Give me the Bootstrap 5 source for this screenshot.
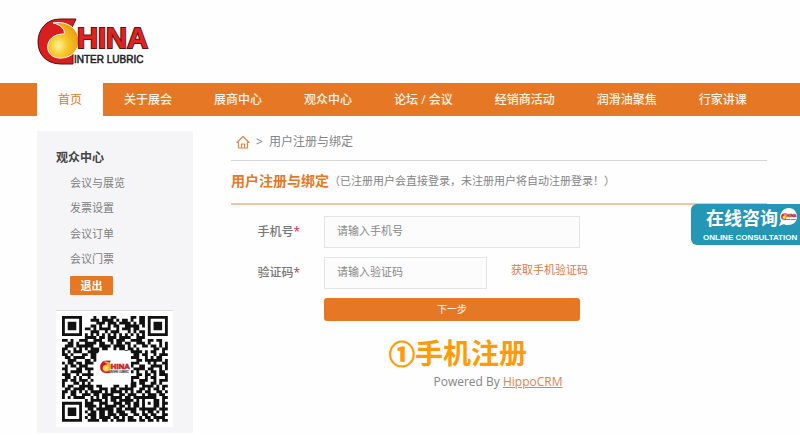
<!DOCTYPE html>
<html lang="zh-CN">
<head>
<meta charset="utf-8">
<meta name="viewport" content="width=device-width, initial-scale=1">
<title>用户注册与绑定</title>
<link href="https://cdn.jsdelivr.net/npm/bootstrap@5.3.0/dist/css/bootstrap.min.css" rel="stylesheet">
<style>
:root{--brand:#e67825}
body{font-family:"Open Sans","Noto Sans CJK SC",sans-serif;font-size:12px;line-height:20px;color:#858585;background:#fefefe}
.wrap{padding-left:37px;padding-right:33px}
.site-head{padding-top:16px;height:83px}
.site-nav{background:var(--brand)}
.site-nav .nav-link{padding:7px 21px 6px;color:#fff3e4;font-size:12px;line-height:20px;font-weight:500}
.site-nav .nav-link.active{background:#fefefe;color:var(--brand);font-weight:400}
.side{width:156px;background:#f5f5f7;padding:17px 19px 6px;margin-top:15px}
.side h2{font-size:12px;line-height:20px;color:#444;font-weight:700;margin-bottom:4px}
.side li{font-size:11px;line-height:20px;margin-bottom:5px;padding:1px 0 0 14px}
.side li:nth-child(even){padding-top:0}
.side a.item{color:#808080;text-decoration:none}
.btn-brand{background:var(--brand);color:#fff;border:0;border-radius:3px;font-size:10px;line-height:15px;padding:4px}
.btn-brand:hover{background:#d2691a;color:#fff}
.btn-exit{width:43px;font-size:11px;font-weight:700;border-radius:1px;padding:2px 0;margin:7px 0 0 14px}
.qr{display:block;width:117px;background:#fff;margin-top:15px}
.main-col{margin:15px 0 0 38px}
.crumb{border-bottom:1px solid #d6d6d6;padding:1px 0 8px 5px;gap:6px}
.title-row{border-bottom:2px solid #ecc6a5;padding:10px 0 12px}
.title-row h1{font-size:14px;line-height:20px;font-weight:700;color:var(--brand)}
.title-row span{font-size:11px}
.reg-form{padding-top:11px}
.reg-form .lab{width:69px;margin-right:24px;text-align:right;font-weight:500;color:#777}
.reg-form .lab b{color:#e0264a;font-weight:500}
.reg-form .form-control{border:1px solid #e4e4e6;border-radius:0;background:#fcfcfc;font-size:11px;line-height:20px;padding:4px 12px 6px;min-height:0}
.reg-form .form-control::placeholder{color:#888;opacity:1}
.form-line{margin-bottom:9px}
.field{width:256px}
.field-short{width:163px}
.code-link{font-size:11px;color:#dd7945;text-decoration:none;margin:0 0 6px 24px}
.foot{margin-right:82px}
.step{font-size:28px;line-height:32px;font-weight:700;color:#ff9c05}
.step span{-webkit-text-stroke:1px #ff9c05;font-size:26px}
.powered{padding-left:80px;padding-top:2px}
.foot a{color:#dc8450}
.consult{position:absolute;right:0;top:204px;width:109px;height:41px;background:#2596b4;border-radius:6px 0 0 6px;color:#fff;text-decoration:none}
.consult svg{display:block}
</style>
<script src="https://cdn.jsdelivr.net/npm/bootstrap@5.3.0/dist/js/bootstrap.bundle.min.js"></script>
</head>
<body>
<header class="site-head wrap">
<a href="#" aria-label="China Inter Lubric">
<svg width="112" height="52" viewBox="0 0 112 52">
<defs>
<radialGradient id="drop" cx=".35" cy=".65" r=".7"><stop offset="0" stop-color="#fff39a"/><stop offset=".4" stop-color="#f8c72a"/><stop offset="1" stop-color="#e99a0c"/></radialGradient>
<g id="mark-shape">
<path d="M39 3H23C9 3 1 14 1 26c0 13 9 22 23 22h12V34H24z" fill="#d81e1e" stroke="#5b1010" stroke-width="1"/>
<path d="M16 7c10-2 20 2 24 10 5 11-1 24-15 25-10 1-16-6-14-14 2-7 8-10 16-10 2-4-4-10-11-11z" fill="url(#drop)" stroke="#fff" stroke-width="1"/>
<text x="40" y="32" font-family="'Liberation Sans',Arial,sans-serif" font-weight="700" font-size="29" fill="#e02320" stroke="#5a1411" stroke-width="2" paint-order="stroke">HINA</text>
<text x="37" y="47" font-family="'Liberation Sans',Arial,sans-serif" font-size="10" fill="#222" stroke="#222" stroke-width=".5">INTER LUBRIC</text>
</g>
</defs>
<use href="#mark-shape"/>
</svg></a>
</header>
<nav class="site-nav wrap">
<div class="nav flex-nowrap text-nowrap">
<a class="nav-link active" href="#">首页</a><a class="nav-link" href="#">关于展会</a><a class="nav-link" href="#">展商中心</a><a class="nav-link" href="#">观众中心</a><a class="nav-link" href="#">论坛 / 会议</a><a class="nav-link" href="#">经销商活动</a><a class="nav-link" href="#">润滑油聚焦</a><a class="nav-link" href="#">行家讲课</a>
</div>
</nav>
<div class="wrap d-flex align-items-start">
<aside class="side flex-shrink-0">
<h2>观众中心</h2>
<ul class="list-unstyled mb-0">
<li><a class="item" href="#">会议与展览</a></li><li><a class="item" href="#">发票设置</a></li><li><a class="item" href="#">会议订单</a></li><li><a class="item" href="#">会议门票</a></li>
</ul>
<button type="button" class="btn btn-brand btn-exit d-block">退出</button>
<svg class="qr" viewBox="0 0 117 117" role="img" aria-label="QR">
<path d="M0 .5h117" stroke="#ddd"/>
<path id="modules" fill="#111" transform="translate(6 6) scale(2.86)"/>
<rect x="42" y="41" width="33" height="33" rx="3" fill="#fff"/>
<use href="#mark-shape" transform="translate(44 50) scale(.27)"/>
</svg>
</aside>
<main class="main-col flex-grow-1">
<nav class="crumb d-flex align-items-center" aria-label="breadcrumb">
<a href="#" class="d-flex" aria-label="首页"><svg width="14" height="14" viewBox="0 0 14 14" fill="none" stroke="#df8748" stroke-width="1.2" stroke-linejoin="round"><path d="M1 7.5 7 1.5l6 6H11.5V13h-9V7.500z"/><path d="M5.500 13V9h3v4"/></svg></a>
<span>&gt;</span><span>用户注册与绑定</span>
</nav>
<div class="title-row d-flex align-items-center">
<h1 class="mb-0">用户注册与绑定</h1><span>（已注册用户会直接登录，未注册用户将自动注册登录！）</span>
</div>
<form class="reg-form">
<div class="form-line d-flex align-items-center">
<label class="lab" for="phone">手机号<b>*</b></label><input id="phone" type="tel" class="form-control field" placeholder="请输入手机号">
</div>
<div class="form-line d-flex align-items-center">
<label class="lab" for="code">验证码<b>*</b></label><input id="code" type="text" class="form-control field-short" placeholder="请输入验证码"><a class="code-link" href="#">获取手机验证码</a>
</div>
<div class="d-flex"><span class="lab"></span><button type="submit" class="btn btn-brand field">下一步</button></div>
</form>
<footer class="foot text-center mt-3">
<div class="step"><span>①</span>手机注册</div>
<div class="powered">Powered By <a href="#">HippoCRM</a></div>
</footer>
</main>
</div>
<a class="consult" href="#">
<svg width="109" height="41" viewBox="0 0 109 41">
<text x="15" y="21" font-family="'Noto Sans CJK SC',sans-serif" font-weight="700" font-size="18" fill="#fff">在线咨询</text>
<text x="12" y="36" font-family="'Liberation Sans',sans-serif" font-weight="700" font-size="8" fill="#fff">ONLINE CONSULTATION</text>
<path d="M98 4c5 0 8 4 8 9s-4 8-9 8c-2 0-3 0-4-1l-5 2 2-5c-3-7 2-13 8-13z" fill="#fff"/>
<use href="#mark-shape" transform="translate(90 9) scale(.14)"/>
</svg></a>
<script>
const rows=[
"#######....#..##.##.....##.##.#######",
"#.....#...###.####.#.##.#..##.#.....#",
"#.###.#.....###.###.####.#.##.#.###.#",
"#.###.#...##.#..#.##..#####.#.#.###.#",
"#.###.#.##.#.####..#.###.##...#.###.#",
"#.....#...###..#.###...#.#.##.#.....#",
"#######.#.#.#.#.#.#.#.#.#.#.#.#######",
"........####.##.###.####..###........",
"##.#..###..###..##.###..####..##.##..",
"..##.#..####.##..#.##.##..###.#...#.#",
".###.######..####.####.#.#..##.##.#.#",
"##..#.#.#.###.##..#.##.##.#.....##.##",
"#.#.###..####.........#.####.#.##..#.",
"##.#...##.##...........#.##.##..#.###",
".##.####..##............###..#.#.##..",
"..###...##.#...........#..##.######.#",
"#.##.##.###.............###...#.#..##",
".#.##.###..............##..##..####.#",
"##...##.###............#.####.##..#.#",
".#.####..#.............##.#..#.##.##.",
"###..#.####............#..##.##.#.###",
".##.#.#..#.............####..#.##...#",
"##.##.###.#............##..###..#.###",
"#...##.#.#..............##.##..##.#..",
"#.##..#####.##....##..#.##..####.#.##",
".##.####.##..###.##.#####..##.#.##.#.",
"##.##.#.#.####.#.####.#.#.##.##..##.#",
"#..##..###.##.####..##.###..#.###.##.",
"#.#.####..#.#.##.####.##.########..##",
"........#.####.#.##.#####.#.#...##.#.",
"#######.###..###..###.##.##.#.#.##.##",
"#.....#.####.#.####.##.#.##.#...##.#.",
"#.###.#..##.######.##.####.######.###",
"#.###.#.#.##.##.##.###..##..#.##.#.#.",
"#.###.#..###.##.###.###..##.##.##..##",
"#.....#.#.##.####.##.#.##..#.##.####.",
"#######..####.##.#.###.###.##.##.#.##"];
document.getElementById("modules").setAttribute("d",rows.map((r,y)=>[...r].map((c,x)=>c==="#"?`M${x} ${y}h1v1h-1z`:"").join("")).join(""));
</script>
</body>
</html>
